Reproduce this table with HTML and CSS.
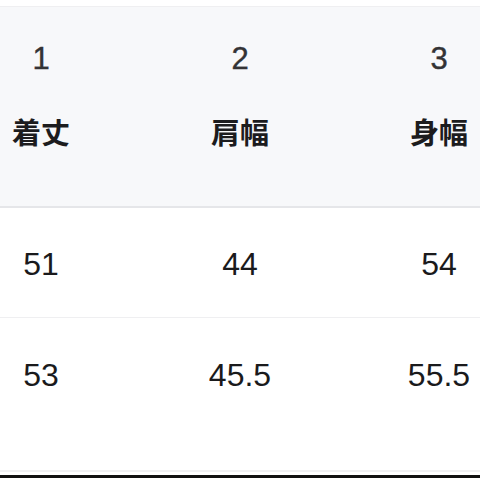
FILE: index.html
```html
<!DOCTYPE html>
<html lang="ja">
<head>
<meta charset="utf-8">
<title>サイズ表</title>
<link rel="stylesheet" href="styles.css">
</head>
<body>
<div class="top-gap"></div>
<div class="head">
  <div class="grid nums">
    <span>1</span><span>2</span><span>3</span>
  </div>
  <div class="grid labels">
    <span>着丈</span><span>肩幅</span><span>身幅</span>
  </div>
</div>
<div class="grid row sep">
  <span>51</span><span>44</span><span>54</span>
</div>
<div class="grid row">
  <span>53</span><span>45.5</span><span>55.5</span>
</div>
<div class="foot-rule"></div>
<div class="foot-bar"></div>
</body>
</html>
```
FILE: styles.css
```css
html, body {
  margin: 0;
  padding: 0;
  background: #ffffff;
  width: 480px;
  height: 480px;
  overflow: hidden;
  font-family: "Liberation Sans", "Noto Sans CJK JP", sans-serif;
}
.top-gap {
  height: 6px;
  border-bottom: 1px solid #efeff1;
}
.head {
  background: #f7f8fa;
  height: 201px;
  box-sizing: border-box;
  padding-top: 32px;
  border-bottom: 2px solid #e5e6e9;
}
.grid {
  display: grid;
  grid-template-columns: 82px 1fr 82px;
  text-align: center;
}
.nums {
  font-size: 31px;
  line-height: 40px;
  font-weight: 400;
  color: #333335;
  -webkit-text-stroke: 0.4px #333335;
}
.labels {
  margin-top: 32px;
  font-family: "Noto Sans CJK JP", sans-serif;
  font-size: 29px;
  line-height: 40px;
  font-weight: 700;
  color: #1c1c1e;
}
.row {
  height: 110px;
  box-sizing: border-box;
  padding-top: 4px;
  align-items: center;
  font-size: 32px;
  font-weight: 400;
  color: #1a1a1c;
}
.sep {
  border-bottom: 1px solid #efeff1;
}
.foot-rule {
  margin-top: 42px;
  height: 2px;
  background: #f0f0f2;
}
.foot-bar {
  margin-top: 3px;
  height: 3px;
  background: #111111;
}
```
